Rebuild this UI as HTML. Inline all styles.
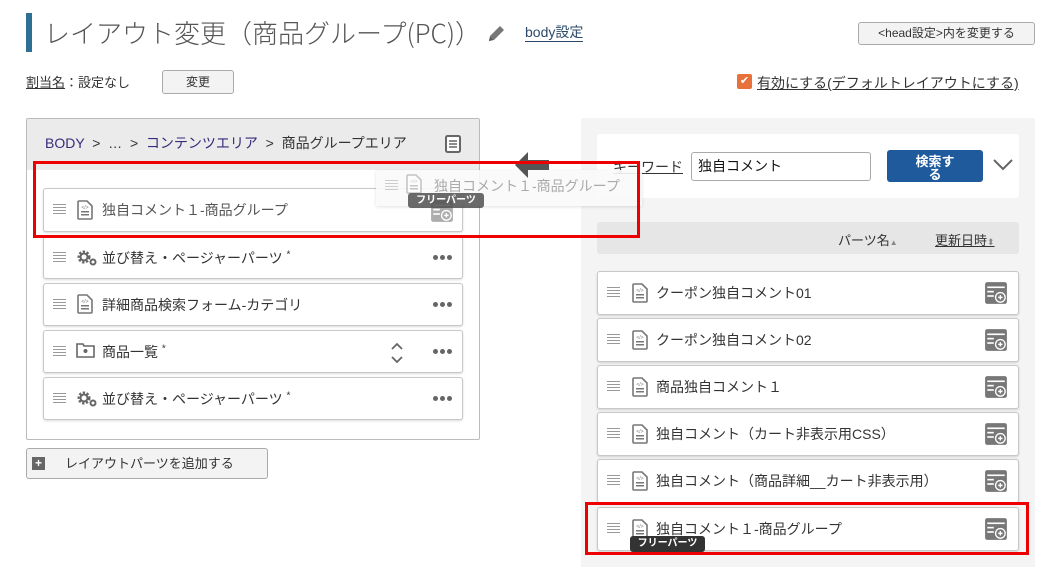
<!DOCTYPE html><html><head><meta charset="utf-8"><style>
*{box-sizing:border-box;margin:0;padding:0}
body{width:1042px;height:567px;overflow:hidden;background:#fff;font-family:"Liberation Sans","Noto Sans CJK JP",sans-serif;color:#333;position:relative;font-size:14px}
.a{position:absolute}
.btn{position:absolute;border:1px solid #aaa;border-radius:3px;background:#f3f3f3;font-size:12px;text-align:center;color:#333}
.it{position:absolute;background:#fff;border:1px solid #c8c8c8;border-radius:3px;box-shadow:0 1px 2px rgba(0,0,0,.15)}
.it .t{position:absolute;left:58px;top:50%;transform:translateY(-50%);font-size:14px;white-space:nowrap;color:#333}
.hb{position:absolute;left:9px;top:50%;margin-top:-6px;width:13px;height:11px;background:repeating-linear-gradient(#999 0 1px,transparent 1px 3px)}
.dt{position:absolute;right:10px;top:50%;margin-top:-3px;font-size:0}
.dt i{display:inline-block;width:5px;height:5px;border-radius:50%;background:#666;margin-left:2px}
.ad{position:absolute;right:10px;top:50%;margin-top:-12px}
.tip{position:absolute;background:#333;color:#fff;font-size:10px;font-weight:bold;border-radius:3px;text-align:center;line-height:15px}
</style></head><body>
<svg width="0" height="0" style="position:absolute"><defs>
<symbol id="doc" viewBox="0 0 16 20"><path d="M2 1h8l5 5v12a1 1 0 0 1-1 1H2a1 1 0 0 1-1-1V2a1 1 0 0 1 1-1z" fill="#fff" stroke="#777" stroke-width="1.6"/><rect x="4" y="11" width="8" height="1.5" fill="#777"/><rect x="4" y="14" width="8" height="1.5" fill="#777"/><text x="8" y="9" font-size="5" text-anchor="middle" fill="#777" font-family="Liberation Sans">&lt;/&gt;</text></symbol>
<symbol id="add" viewBox="0 0 22 22"><rect x="1" y="1" width="20" height="20" rx="2" fill="#777"/><rect x="3" y="5" width="16" height="1.5" fill="#fff"/><rect x="3" y="9" width="6" height="1.5" fill="#fff"/><rect x="3" y="13" width="6" height="1.5" fill="#fff"/><circle cx="15" cy="15" r="5" fill="#fff"/><circle cx="15" cy="15" r="3.8" fill="#777"/><path d="M13 15h4M15 13v4" stroke="#fff" stroke-width="1.3"/></symbol>
<symbol id="gear" viewBox="0 0 22 18"><circle cx="8" cy="8" r="5" fill="none" stroke="#666" stroke-width="3" stroke-dasharray="2.2 1.5"/><circle cx="8" cy="8" r="3.5" fill="none" stroke="#666" stroke-width="2"/><circle cx="17" cy="13" r="2.5" fill="none" stroke="#666" stroke-width="2"/></symbol>
</defs></svg>

<div class="a" style="left:26px;top:13px;width:6px;height:39px;background:#2f6f96"></div>
<div class="a" style="left:44px;top:15px;font-size:26px;color:#555;font-weight:300;white-space:nowrap;font-family:'Noto Sans CJK JP','Liberation Sans',sans-serif;line-height:36px">レイアウト変更（商品グループ(PC)）</div>
<svg class="a" style="left:485px;top:23px" width="22" height="22" viewBox="0 0 22 22"><path d="M4 18l1-5L15 3l4 4L9 17z" fill="#777"/><path d="M4 18l4-1-3-3z" fill="#555"/></svg>
<div class="a" style="left:525px;top:24px;font-size:14px;color:#2b4a6a;border-bottom:1px solid #2b4a6a;line-height:17px">body設定</div>
<div class="btn" style="left:858px;top:22px;width:177px;height:23px;line-height:21px">&lt;head設定&gt;内を変更する</div>

<div class="a" style="left:26px;top:72px;font-size:13px"><span style="text-decoration:underline">割当名</span>：設定なし</div>
<div class="btn" style="left:162px;top:70px;width:72px;height:24px;line-height:22px">変更</div>
<div class="a" style="left:737px;top:74px;width:15px;height:15px;background:#e8703a;border-radius:2px;color:#fff;font-size:11px;line-height:15px;text-align:center">✔</div>
<div class="a" style="left:757px;top:73px;font-size:14px;text-decoration:underline;white-space:nowrap">有効にする(デフォルトレイアウトにする)</div>

<!-- left panel -->
<div class="a" style="left:26px;top:118px;width:454px;height:322px;border:1px solid #bbb;border-radius:2px;background:#fff"></div>
<div class="a" style="left:27px;top:119px;width:452px;height:51px;background:#ebebeb"></div>
<div class="a" style="left:45px;top:133px;font-size:14px;white-space:nowrap"><span style="color:#3a2a7a">BODY</span> &nbsp;&gt; &nbsp;… &nbsp;&gt; &nbsp;<span style="color:#3a2a7a">コンテンツエリア</span> &nbsp;&gt; &nbsp;商品グループエリア</div>
<svg class="a" style="left:444px;top:134px" width="18" height="20" viewBox="0 0 18 20"><rect x="2" y="2" width="14" height="16" rx="1.5" fill="#fff" stroke="#666" stroke-width="2"/><path d="M5 7h8M5 10h8M5 13h8" stroke="#666" stroke-width="1.5"/></svg>

<div class="it" style="left:43px;top:188px;width:420px;height:44px"><div class="hb"></div><svg class="a" style="left:33px;top:11px" width="16" height="20"><use href="#doc"/></svg><div class="t" style="color:#555">独自コメント１-商品グループ</div></div>
<div class="it" style="left:43px;top:236px;width:420px;height:43px"><div class="hb"></div><svg class="a" style="left:32px;top:12px" width="22" height="18"><use href="#gear"/></svg><div class="t">並び替え・ページャーパーツ <sup style="font-size:10px">*</sup></div><div class="dt"><i></i><i></i><i></i></div></div>
<div class="it" style="left:43px;top:283px;width:420px;height:43px"><div class="hb"></div><svg class="a" style="left:33px;top:10px" width="16" height="20"><use href="#doc"/></svg><div class="t">詳細商品検索フォーム-カテゴリ</div><div class="dt"><i></i><i></i><i></i></div></div>
<div class="it" style="left:43px;top:330px;width:420px;height:43px"><div class="hb"></div><svg class="a" style="left:32px;top:11px" width="19" height="16" viewBox="0 0 19 16"><path d="M1 2h6l1 2h10v11H1z" fill="none" stroke="#666" stroke-width="1.6"/><circle cx="9.5" cy="9" r="2" fill="#666"/></svg><div class="t">商品一覧 <sup style="font-size:10px">*</sup></div><svg class="a" style="left:345px;top:10px" width="16" height="24"><path d="M3 8l5-5 5 5M3 16l5 5 5-5" fill="none" stroke="#666" stroke-width="1.8"/></svg><div class="dt"><i></i><i></i><i></i></div></div>
<div class="it" style="left:43px;top:377px;width:420px;height:43px"><div class="hb"></div><svg class="a" style="left:32px;top:12px" width="22" height="18"><use href="#gear"/></svg><div class="t">並び替え・ページャーパーツ <sup style="font-size:10px">*</sup></div><div class="dt"><i></i><i></i><i></i></div></div>

<div class="btn" style="left:26px;top:448px;width:242px;height:31px;line-height:29px;font-size:13px;text-align:left;padding-left:38px">レイアウトパーツを追加する</div>
<div class="a" style="left:32px;top:457px;width:13px;height:13px;background:#666;color:#fff;font-size:12px;line-height:12px;text-align:center;font-weight:bold">+</div>

<!-- right panel -->
<div class="a" style="left:581px;top:118px;width:454px;height:449px;background:#f4f4f4"></div>
<div class="a" style="left:597px;top:134px;width:422px;height:64px;background:#fff;border-radius:3px"></div>
<div class="a" style="left:613px;top:157px;font-size:14px;text-decoration:underline">キーワード</div>
<div class="a" style="left:691px;top:152px;width:180px;height:29px;border:1px solid #aaa;border-radius:3px;font-size:14px;line-height:27px;padding-left:6px;color:#111">独自コメント</div>
<div class="a" style="left:887px;top:150px;width:96px;height:32px;background:#1f5a9c;border-radius:3px;color:#fff;font-size:13px;font-weight:bold;text-align:center;line-height:13px;padding-top:5px;overflow:hidden">検索す<br>る</div>
<svg class="a" style="left:992px;top:158px" width="22" height="14"><path d="M2 2l9 9 9-9" fill="none" stroke="#666" stroke-width="2"/></svg>
<div class="a" style="left:597px;top:222px;width:422px;height:32px;background:#e6e6e6;border-radius:3px"></div>
<div class="a" style="left:838px;top:230px;font-size:13px">パーツ名<span style="font-size:8px;color:#888">▲</span></div>
<div class="a" style="left:935px;top:230px;font-size:13px;text-decoration:underline">更新日時<span style="font-size:9px;color:#888">⬍</span></div>

<div class="it" style="left:597px;top:271px;width:422px;height:44px"><div class="hb"></div><svg class="a" style="left:34px;top:11px" width="16" height="20"><use href="#doc"/></svg><div class="t">クーポン独自コメント01</div><svg class="ad" width="24" height="24" viewBox="0 0 22 22"><use href="#add"/></svg></div>
<div class="it" style="left:597px;top:318px;width:422px;height:44px"><div class="hb"></div><svg class="a" style="left:34px;top:11px" width="16" height="20"><use href="#doc"/></svg><div class="t">クーポン独自コメント02</div><svg class="ad" width="24" height="24" viewBox="0 0 22 22"><use href="#add"/></svg></div>
<div class="it" style="left:597px;top:365px;width:422px;height:44px"><div class="hb"></div><svg class="a" style="left:34px;top:11px" width="16" height="20"><use href="#doc"/></svg><div class="t">商品独自コメント１</div><svg class="ad" width="24" height="24" viewBox="0 0 22 22"><use href="#add"/></svg></div>
<div class="it" style="left:597px;top:412px;width:422px;height:44px"><div class="hb"></div><svg class="a" style="left:34px;top:11px" width="16" height="20"><use href="#doc"/></svg><div class="t">独自コメント（カート非表示用CSS）</div><svg class="ad" width="24" height="24" viewBox="0 0 22 22"><use href="#add"/></svg></div>
<div class="it" style="left:597px;top:459px;width:422px;height:44px"><div class="hb"></div><svg class="a" style="left:34px;top:11px" width="16" height="20"><use href="#doc"/></svg><div class="t">独自コメント（商品詳細__カート非表示用）</div><svg class="ad" width="24" height="24" viewBox="0 0 22 22"><use href="#add"/></svg></div>
<div class="it" style="left:597px;top:507px;width:422px;height:44px"><div class="hb"></div><svg class="a" style="left:34px;top:11px" width="16" height="20"><use href="#doc"/></svg><div class="t">独自コメント１-商品グループ</div><svg class="ad" width="24" height="24" viewBox="0 0 22 22"><use href="#add"/></svg></div>
<div class="tip" style="left:630px;top:536px;width:75px;height:16px">フリーパーツ</div>

<!-- drag ghost -->
<div class="a" style="left:376px;top:170px;width:266px;height:36px;background:rgba(250,250,250,.9);box-shadow:0 1px 3px rgba(0,0,0,.12)"></div>
<div class="a" style="left:385px;top:180px;width:13px;height:11px;background:repeating-linear-gradient(#ccc 0 1px,transparent 1px 3px)"></div>
<svg class="a" style="left:406px;top:174px;opacity:.4" width="16" height="20"><use href="#doc"/></svg>
<div class="a" style="left:434px;top:176px;font-size:14px;color:#aaa;white-space:nowrap">独自コメント１-商品グループ</div>
<svg class="a" style="left:430px;top:199px;opacity:.6" width="24" height="24" viewBox="0 0 22 22"><use href="#add"/></svg>
<div class="tip" style="left:408px;top:193px;width:76px;height:15px;background:rgba(80,80,80,.85)">フリーパーツ</div>
<svg class="a" style="left:514px;top:151px" width="36" height="28"><path d="M1 14L14 1v8h21v10H14v8z" fill="#555"/></svg>

<!-- red boxes -->
<div class="a" style="left:33px;top:161px;width:607px;height:77px;border:3px solid #e00"></div>
<div class="a" style="left:585px;top:502px;width:444px;height:53px;border:3px solid #e00"></div>
</body></html>
